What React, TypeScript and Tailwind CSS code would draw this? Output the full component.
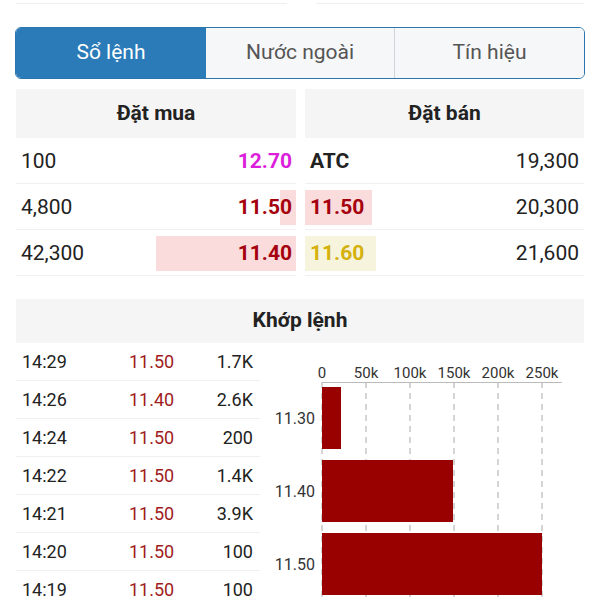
import React from 'react';

interface BookRow {
  buyQty: string;
  buyPrice: string;
  buyColor: string;
  buyBar: number;
  sellPrice: string;
  sellColor: string;
  sellBg: string;
  sellBar: number;
  sellQty: string;
}

const bookRows: BookRow[] = [
  { buyQty: '100', buyPrice: '12.70', buyColor: 'text-[#dc1fdc]', buyBar: 0, sellPrice: 'ATC', sellColor: 'text-[#222]', sellBg: '', sellBar: 0, sellQty: '19,300' },
  { buyQty: '4,800', buyPrice: '11.50', buyColor: 'text-[#a5000e]', buyBar: 16, sellPrice: '11.50', sellColor: 'text-[#a5000e]', sellBg: 'bg-[#fadcdd]', sellBar: 67, sellQty: '20,300' },
  { buyQty: '42,300', buyPrice: '11.40', buyColor: 'text-[#a5000e]', buyBar: 140, sellPrice: '11.60', sellColor: 'text-[#d4b10c]', sellBg: 'bg-[#f7f4de]', sellBar: 71, sellQty: '21,600' },
];

const trades = [
  { time: '14:29', price: '11.50', vol: '1.7K' },
  { time: '14:26', price: '11.40', vol: '2.6K' },
  { time: '14:24', price: '11.50', vol: '200' },
  { time: '14:22', price: '11.50', vol: '1.4K' },
  { time: '14:21', price: '11.50', vol: '3.9K' },
  { time: '14:20', price: '11.50', vol: '100' },
  { time: '14:19', price: '11.50', vol: '100' },
];

const ticks = ['0', '50k', '100k', '150k', '200k', '250k'];
const bars = [
  { label: '11.30', y: 44, w: 19 },
  { label: '11.40', y: 117, w: 131 },
  { label: '11.50', y: 190, w: 220 },
];

function VolumeChart() {
  return (
    <svg width="314" height="257" viewBox="0 0 314 257" className="block">
      {ticks.map((t, i) => (
        <g key={t}>
          <text x={52 + i * 44} y={35} textAnchor="middle" fontSize="15" fill="#333" fontFamily="Roboto, sans-serif">{t}</text>
          <line x1={52 + i * 44} y1={39} x2={52 + i * 44} y2={257} stroke="#aaa" strokeWidth="1" strokeDasharray="6 5" />
        </g>
      ))}
      <line x1={52} y1={39.5} x2={292} y2={39.5} stroke="#bbb" strokeWidth="1" />
      {bars.map((b) => (
        <g key={b.label}>
          <rect x={52} y={b.y} width={b.w} height={62} fill="#990000" />
          <text x={45} y={b.y + 37} textAnchor="end" fontSize="16" fill="#333" fontFamily="Roboto, sans-serif">{b.label}</text>
        </g>
      ))}
    </svg>
  );
}

export default function App() {
  return (
    <div className="w-[600px] h-[600px] overflow-hidden bg-white font-['Roboto',sans-serif] text-[#222]">
      <div className="flex justify-between px-4 h-[4px]">
        <div className="w-[271px] border-b border-[#eeeeee]" />
        <div className="w-[268px] border-b border-[#eeeeee]" />
      </div>

      <div className="mx-[15px] mt-[23px] flex h-[52px] rounded-md border border-[#2c75ad] overflow-hidden text-[21px]">
        <div className="w-[190px] flex items-center justify-center bg-[#2a7bb8] text-white">Sổ lệnh</div>
        <div className="flex-1 flex items-center justify-center bg-[#f6f7f8] text-[#555]">Nước ngoài</div>
        <div className="w-[190px] flex items-center justify-center bg-[#f6f7f8] text-[#555] border-l border-[#d0d4d8]">Tín hiệu</div>
      </div>

      <div className="mt-[10px] px-4 flex gap-[9px]">
        <div className="w-[280px]">
          <div className="h-[49px] bg-[#f5f5f5] flex items-center justify-center font-bold text-[21px]">Đặt mua</div>
          {bookRows.map((r) => (
            <div key={r.buyQty} className="h-[46px] pt-[2px] border-b border-[#f0f0f0] flex items-center justify-between text-[21px]">
              <span className="pl-[5px]">{r.buyQty}</span>
              <div className="relative h-[35px] flex items-center justify-end pr-[4px]">
                {r.buyBar > 0 && <div className="absolute right-0 top-0 bottom-0 bg-[#fadcdd]" style={{ width: r.buyBar }} />}
                <span className={`relative font-bold ${r.buyColor}`}>{r.buyPrice}</span>
              </div>
            </div>
          ))}
        </div>
        <div className="flex-1">
          <div className="h-[49px] bg-[#f5f5f5] flex items-center justify-center font-bold text-[21px]">Đặt bán</div>
          {bookRows.map((r) => (
            <div key={r.sellQty} className="h-[46px] pt-[2px] border-b border-[#f0f0f0] flex items-center justify-between text-[21px]">
              <span className={`h-[35px] flex items-center pl-[5px] font-bold ${r.sellColor} ${r.sellBg}`} style={r.sellBar ? { width: r.sellBar } : undefined}>{r.sellPrice}</span>
              <span className="pr-[5px]">{r.sellQty}</span>
            </div>
          ))}
        </div>
      </div>

      <div className="mx-4 mt-[23px] h-[44px] bg-[#f5f5f5] flex items-center justify-center font-bold text-[21px]">Khớp lệnh</div>

      <div className="px-4 flex">
        <div className="w-[244px]">
          {trades.map((t) => (
            <div key={t.time} className="h-[38px] border-b border-[#f0f0f0] flex items-center text-[18px]">
              <span className="w-[113px] pl-[6px]">{t.time}</span>
              <span className="w-[60px] text-[#a01c1c]">{t.price}</span>
              <span className="flex-1 text-right pr-[7px]">{t.vol}</span>
            </div>
          ))}
        </div>
        <div className="pl-[10px]">
          <VolumeChart />
        </div>
      </div>
    </div>
  );
}
